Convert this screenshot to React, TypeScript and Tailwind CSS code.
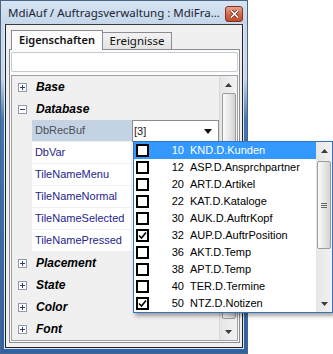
import React from "react";

type Row =
  | { type: "cat"; label: string; open?: boolean }
  | { type: "prop"; label: string; selected?: boolean };

const rows: Row[] = [
  { type: "cat", label: "Base" },
  { type: "cat", label: "Database", open: true },
  { type: "prop", label: "DbRecBuf", selected: true },
  { type: "prop", label: "DbVar" },
  { type: "prop", label: "TileNameMenu" },
  { type: "prop", label: "TileNameNormal" },
  { type: "prop", label: "TileNameSelected" },
  { type: "prop", label: "TileNamePressed" },
  { type: "cat", label: "Placement" },
  { type: "cat", label: "State" },
  { type: "cat", label: "Color" },
  { type: "cat", label: "Font" },
];

const items: { n: string; t: string; checked?: boolean }[] = [
  { n: "10", t: "KND.D.Kunden" },
  { n: "12", t: "ASP.D.Ansprchpartner" },
  { n: "20", t: "ART.D.Artikel" },
  { n: "22", t: "KAT.D.Kataloge" },
  { n: "30", t: "AUK.D.AuftrKopf" },
  { n: "32", t: "AUP.D.AuftrPosition", checked: true },
  { n: "36", t: "AKT.D.Temp" },
  { n: "38", t: "APT.D.Temp" },
  { n: "40", t: "TER.D.Termine" },
  { n: "50", t: "NTZ.D.Notizen", checked: true },
];

function Expander({ open }: { open?: boolean }) {
  return (
    <svg width="9" height="9" viewBox="0 0 9 9" className="block">
      <rect x="0.5" y="0.5" width="8" height="8" fill="#ffffff" stroke="#8f9bab" />
      <line x1="2" y1="4.5" x2="7" y2="4.5" stroke="#2f3f6e" />
      {!open && <line x1="4.5" y1="2" x2="4.5" y2="7" stroke="#2f3f6e" />}
    </svg>
  );
}

function ArrowUp() {
  return (
    <svg width="7" height="4" viewBox="0 0 7 4" className="block">
      <polygon points="0,4 7,4 3.5,0" fill="#3c3c3c" />
    </svg>
  );
}
function ArrowDown() {
  return (
    <svg width="7" height="4" viewBox="0 0 7 4" className="block">
      <polygon points="0,0 7,0 3.5,4" fill="#3c3c3c" />
    </svg>
  );
}

function CheckBox({ checked }: { checked?: boolean }) {
  return (
    <div className="w-[13px] h-[13px] border-2 border-black bg-white flex items-center justify-center">
      {checked && (
        <svg width="9" height="9" viewBox="0 0 9 9" className="block">
          <polyline points="1,4.5 3.5,7 8,1.5" fill="none" stroke="#000" strokeWidth="1.6" />
        </svg>
      )}
    </div>
  );
}

export default function App() {
  return (
    <div className="relative w-[333px] h-[354px] bg-white overflow-hidden font-['Liberation_Sans',Arial,sans-serif]">
      {/* Window */}
      <div className="w-[248px] h-[354px] border border-[#4d6580] flex flex-col bg-[linear-gradient(to_bottom,#cbdbed_0%,#c7d8ec_22%,#3f76b6_34%,#2d63a6_100%)]">
        {/* Title bar */}
        <div className="h-[23px] shrink-0 flex items-center pl-[7px] pr-[4px] bg-[linear-gradient(to_bottom,#d6e4f3,#c6d7eb)]">
          <div className="flex-1 text-[11.5px] leading-none text-[#1b2533] whitespace-nowrap font-['Noto_Sans',sans-serif] pt-[1px]">
            MdiAuf / Auftragsverwaltung : MdiFra...
          </div>
          <div className="w-[18px] h-[16px] rounded-[3px] border border-[#7d3422] bg-[linear-gradient(to_bottom,#eba48f,#d4694c_50%,#c24a2e)] flex items-center justify-center mt-[2px]">
            <svg width="9" height="8" viewBox="0 0 9 8" className="block">
              <path d="M1 0.5 L8 7.5 M8 0.5 L1 7.5" stroke="#5a2418" strokeWidth="3" />
              <path d="M1 0.5 L8 7.5 M8 0.5 L1 7.5" stroke="#ffffff" strokeWidth="1.6" />
            </svg>
          </div>
        </div>
        {/* Frame inner */}
        <div className="flex-1 flex flex-col px-[3px] pb-[5px]">
          <div className="flex-1 flex flex-col border-x border-b border-[#dbe7f4] px-0">
            <div className="flex-1 flex flex-col border border-[#222] border-t-[#3a3a3a] bg-[#f0f0f0] pt-[5px] pb-[4px] pl-[3px] pr-[2px]">
              {/* Tabs */}
              <div className="relative z-10 h-[20px] -mb-px flex items-end pl-[2px] font-['Noto_Sans',sans-serif]">
                <div className="w-[92px] h-[20px] border border-b-0 border-[#898c95] bg-[#fcfcfc] flex items-center justify-center text-[11px] font-semibold text-[#111]">
                  Eigenschaften
                </div>
                <div className="w-[69px] h-[18px] border border-l-0 border-[#898c95] bg-[linear-gradient(to_bottom,#f2f2f2,#e3e3e3)] flex items-center justify-center text-[11.5px] text-[#111]">
                  Ereignisse
                </div>
              </div>
              {/* Panel */}
              <div className="flex-1 flex flex-col border border-[#898c95] bg-[#fcfcfc] pt-[2px] px-[1px] pb-[1px]">
                <div className="h-[20px] shrink-0 border border-[#c6cad1] rounded-[2px] bg-white" />
                {/* Property grid */}
                <div className="mt-[3px] flex-1 flex border border-[#a0a0a0] bg-[#f0f0f0]">
                  <div className="w-[207px] flex flex-col">
                    {rows.map((r, i) =>
                      r.type === "cat" ? (
                        <div key={i} className="h-[22px] flex items-center">
                          <div className="w-[20px] flex justify-center pl-[1px]">
                            <Expander open={r.open} />
                          </div>
                          <div className="pl-[4px] text-[12px] font-bold italic text-black leading-none">
                            {r.label}
                          </div>
                        </div>
                      ) : (
                        <div key={i} className="h-[22px] flex">
                          <div className="w-[20px]" />
                          <div
                            className={
                              r.selected
                                ? "w-[100px] h-[21px] bg-[#c4d3e3] flex items-center pl-[3px] text-[11px] text-[#4a4f58]"
                                : "w-[100px] h-[21px] bg-white flex items-center pl-[3px] text-[11px] text-[#24248c]"
                            }
                          >
                            {r.label}
                          </div>
                          {r.selected ? (
                            <div className="w-[87px] h-[22px] border border-[#8c8c8c] bg-white flex items-center pl-[1px] pr-[6px] text-[11px] text-[#1a1a1a]">
                              <span className="flex-1">[3]</span>
                              <svg width="8" height="5" viewBox="0 0 8 5" className="block">
                                <polygon points="0,0 8,0 4,5" fill="#111" />
                              </svg>
                            </div>
                          ) : (
                            <div className="w-[87px] h-[21px] ml-px bg-white" />
                          )}
                        </div>
                      )
                    )}
                  </div>
                  {/* grid scrollbar */}
                  <div className="flex-1 flex flex-col items-center bg-[linear-gradient(to_right,#e6e6e6,#f2f2f2)] border-l border-[#d8d8d8]">
                    <div className="h-[17px] flex items-center justify-center">
                      <ArrowUp />
                    </div>
                    <div className="w-[14px] h-[226px] rounded-[2px] border border-[#9c9c9c] bg-[linear-gradient(to_right,#fbfbfb,#e4e4e4_60%,#d2d2d2)]" />
                    <div className="flex-1" />
                    <div className="h-[17px] flex items-center justify-center">
                      <ArrowDown />
                    </div>
                  </div>
                </div>
              </div>
            </div>
          </div>
        </div>
      </div>

      {/* Dropdown popup */}
      <div className="absolute left-[133px] top-[141px] w-[200px] h-[172px] border border-[#3a6fba] bg-white flex shadow-[2px_3px_4px_rgba(0,0,0,0.35)]">
        <div className="w-[182px] flex flex-col">
          {items.map((it, i) => (
            <div
              key={i}
              className={
                i === 0
                  ? "h-[17px] flex items-center bg-[#3399ff] text-white"
                  : "h-[17px] flex items-center text-black"
              }
            >
              <div className="ml-[2px]">
                <CheckBox checked={it.checked} />
              </div>
              <div className="w-[35px] text-right text-[11px] leading-none">{it.n}</div>
              <div className="ml-[6px] text-[11px] leading-none whitespace-nowrap">{it.t}</div>
            </div>
          ))}
        </div>
        {/* popup scrollbar */}
        <div className="flex-1 flex flex-col items-center bg-[linear-gradient(to_right,#e6e6e6,#f2f2f2)]">
          <div className="h-[17px] flex items-center justify-center">
            <ArrowUp />
          </div>
          <div className="mt-[2px] w-[14px] h-[88px] rounded-[2px] border border-[#9c9c9c] bg-[linear-gradient(to_right,#fbfbfb,#e4e4e4_60%,#d2d2d2)] flex flex-col items-center justify-center gap-[1px]">
            <div className="w-[6px] h-px bg-[#666]" />
            <div className="w-[6px] h-px bg-[#666]" />
            <div className="w-[6px] h-px bg-[#666]" />
          </div>
          <div className="flex-1" />
          <div className="h-[17px] flex items-center justify-center">
            <ArrowDown />
          </div>
        </div>
      </div>
    </div>
  );
}
